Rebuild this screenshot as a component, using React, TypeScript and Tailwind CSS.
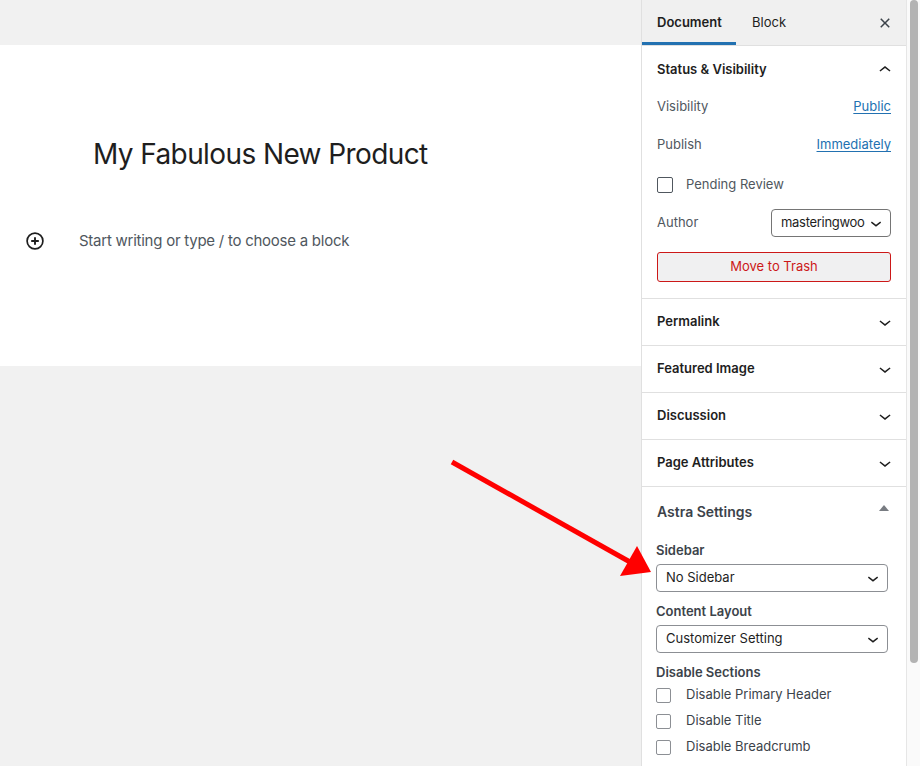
import type { ReactNode } from "react";

const font = "font-['Inter','Liberation_Sans',sans-serif]";

function ChevronDown({ size = 24 }: { size?: number }) {
  return (
    <svg width={size} height={size} viewBox="0 0 24 24" fill="#1e1e1e">
      <path d="M17.5 11.6L12 16l-5.5-4.4.9-1.2L12 14l4.6-3.6 1 1.2z" />
    </svg>
  );
}

function ChevronUp() {
  return (
    <svg width={24} height={24} viewBox="0 0 24 24" fill="#1e1e1e">
      <path d="M6.5 12.4L12 8l5.5 4.4-.9 1.2L12 10l-4.6 3.6-1-1.2z" />
    </svg>
  );
}

function CloseIcon() {
  return (
    <svg width={24} height={24} viewBox="0 0 24 24" fill="#3c434a">
      <path d="M12 13.06l3.712 3.713 1.061-1.06L13.061 12l3.712-3.712-1.06-1.06L12 10.938 8.288 7.227l-1.061 1.06L10.939 12l-3.712 3.712 1.06 1.061L12 13.061z" />
    </svg>
  );
}

function PanelRow({ title }: { title: string }) {
  return (
    <div className="flex h-[47px] items-center justify-between border-b border-[#e0e0e0] pl-[15px] pr-[9px]">
      <span className="text-[13px] font-semibold text-[#1e1e1e]">{title}</span>
      <ChevronDown />
    </div>
  );
}

function Select({ value, className }: { value: string; className: string }) {
  return (
    <div
      className={`flex items-center justify-between overflow-hidden rounded-[4px] border border-[#8c8f94] pl-[9px] pr-[3px] text-[13px] text-[#1e1e1e] ${className}`}
    >
      <span className="overflow-hidden whitespace-nowrap">{value}</span>
      <span className="shrink-0">
        <ChevronDown size={22} />
      </span>
    </div>
  );
}

function Check({ children }: { children?: ReactNode }) {
  return (
    <div className="flex h-[26px] items-center">
      <div className="h-[15px] w-[15px] rounded-[2px] border border-[#8c8f94] bg-white" />
      {children && <span className="ml-[15px] text-[13px] text-[#3c434a]">{children}</span>}
    </div>
  );
}

export default function App() {
  return (
    <div className={`relative flex h-[766px] w-[920px] overflow-hidden bg-white ${font}`}>
      {/* editor canvas */}
      <main className="flex flex-1 flex-col bg-[#f1f1f1]">
        <div className="h-[45px] shrink-0" />
        <div className="h-[321px] shrink-0 bg-white">
          <h1 className="mt-[91px] h-[36px] pl-[93px] text-[28px] leading-[36px] font-normal tracking-[-0.6px] text-[#1e1e1e]">
            My Fabulous New Product
          </h1>
          <div className="mt-[57px] flex h-[24px] items-center">
            <svg className="ml-[26px]" width={18} height={18} viewBox="0 0 18 18" fill="none" stroke="#1e1e1e">
              <circle cx="9" cy="9" r="7.9" strokeWidth="1.7" />
              <path d="M9 5.2v7.6M5.2 9h7.6" strokeWidth="1.9" />
            </svg>
            <span className="ml-[35px] text-[15px] tracking-[-0.25px] text-[#50575e]">
              Start writing or type / to choose a block
            </span>
          </div>
        </div>
      </main>

      {/* settings sidebar */}
      <aside className="w-[265px] shrink-0 overflow-hidden border-l border-[#e0e0e0] bg-white">
        <div className="flex h-[46px] items-stretch justify-between border-b border-[#e0e0e0] bg-[#f0f0f0]">
          <div className="flex">
            <div className="flex w-[94px] items-center border-b-[3px] border-[#2271b1] pl-[15px] pt-[3px] text-[13px] font-semibold text-[#1e1e1e]">
              Document
            </div>
            <div className="flex items-center pl-[16px] text-[13px] text-[#1e1e1e]">Block</div>
          </div>
          <div className="flex items-center pr-[9px]">
            <CloseIcon />
          </div>
        </div>

        {/* status & visibility */}
        <section className="border-b border-[#e0e0e0] pb-[16px]">
          <div className="flex h-[47px] items-center justify-between pl-[15px] pr-[9px]">
            <span className="text-[13px] font-semibold text-[#1e1e1e]">Status &amp; Visibility</span>
            <ChevronUp />
          </div>
          <div className="flex flex-col px-[15px] text-[13px]">
            <div className="flex h-[28px] items-center justify-between">
              <span className="text-[#50575e]">Visibility</span>
              <span className="text-[#2271b1] underline underline-offset-2">Public</span>
            </div>
            <div className="mt-[10px] flex h-[28px] items-center justify-between">
              <span className="text-[#50575e]">Publish</span>
              <span className="text-[#2271b1] underline underline-offset-2">Immediately</span>
            </div>
            <div className="mt-[12px] flex h-[28px] items-center">
              <div className="h-[16px] w-[16px] rounded-[2px] border-[1.5px] border-[#50575e]" />
              <span className="ml-[13px] text-[#50575e]">Pending Review</span>
            </div>
            <div className="mt-[10px] flex h-[28px] items-center justify-between">
              <span className="text-[#50575e]">Author</span>
              <Select value="masteringwoo" className="h-[28px] w-[120px] border-[#757575] tracking-[-0.3px]" />
            </div>
            <div className="mt-[15px] flex h-[30px] items-center justify-center rounded-[3px] border border-[#cc1818] bg-[#f0f0f1] text-[#cc1818]">
              Move to Trash
            </div>
          </div>
        </section>

        <PanelRow title="Permalink" />
        <PanelRow title="Featured Image" />
        <PanelRow title="Discussion" />
        <PanelRow title="Page Attributes" />

        {/* astra meta box */}
        <section>
          <div className="flex h-[48px] items-center justify-between pl-[15px] pr-[17px]">
            <span className="text-[14px] font-semibold text-[#3c434a]">Astra Settings</span>
            <span className="mb-[6px] h-0 w-0 border-x-[5px] border-b-[6px] border-x-transparent border-b-[#787c82]" />
          </div>
          <div className="flex flex-col px-[14px]">
            <div className="mt-[5px] h-[20px] text-[13px] leading-[20px] font-semibold text-[#3c434a]">Sidebar</div>
            <Select value="No Sidebar" className="mt-[4px] h-[28px] w-[232px]" />
            <div className="mt-[9px] h-[20px] text-[13px] leading-[20px] font-semibold text-[#3c434a]">Content Layout</div>
            <Select value="Customizer Setting" className="mt-[4px] h-[28px] w-[232px]" />
            <div className="mt-[9px] h-[20px] text-[13px] leading-[20px] font-semibold text-[#3c434a]">Disable Sections</div>
            <Check>Disable Primary Header</Check>
            <Check>Disable Title</Check>
            <Check>Disable Breadcrumb</Check>
            <Check />
          </div>
        </section>
      </aside>

      {/* scrollbar */}
      <div className="relative w-[14px] shrink-0 border-l border-[#e6e6e6] bg-[#fafafa]">
        <div className="absolute left-[3px] top-0 h-[663px] w-[8px] rounded-full bg-[#b3b3b3]" />
      </div>

      {/* annotation arrow */}
      <svg className="pointer-events-none absolute left-0 top-0" width={920} height={766} viewBox="0 0 920 766">
        <line x1="452" y1="462" x2="630" y2="562" stroke="#ff0000" strokeWidth="5" />
        <polygon points="651,572 620,576 637,546" fill="#ff0000" />
      </svg>
    </div>
  );
}
